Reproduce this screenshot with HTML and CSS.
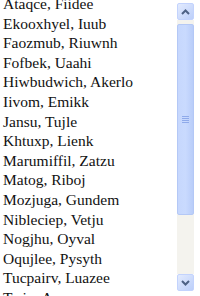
FILE: index.html
```html
<!DOCTYPE html>
<html lang="en">
  <head>
    <meta charset="UTF-8" />
    <title>Names</title>
    <link rel="stylesheet" href="styles.css">
  </head>
  <body>
    <div class="listbox">
      <div class="items">
        <ul class="names">
          <li>Ataqce, Fiidee</li>
          <li>Ekooxhyel, Iuub</li>
          <li>Faozmub, Riuwnh</li>
          <li>Fofbek, Uaahi</li>
          <li>Hiwbudwich, Akerlo</li>
          <li>Iivom, Emikk</li>
          <li>Jansu, Tujle</li>
          <li>Khtuxp, Lienk</li>
          <li>Marumiffil, Zatzu</li>
          <li>Matog, Riboj</li>
          <li>Mozjuga, Gundem</li>
          <li>Nibleciep, Vetju</li>
          <li>Nogjhu, Oyval</li>
          <li>Oqujlee, Pysyth</li>
          <li>Tucpairv, Luazee</li>
          <li>Twin, Avver</li>
        </ul>
      </div>

      <!-- scrollbar -->
      <div class="scrollbar">
        <div class="sb-btn">
          <svg width="9" height="6" viewBox="0 0 9 6"><path d="M1 5 L4.5 1.5 L8 5" fill="none" stroke="#4d6185" stroke-width="2"/></svg>
        </div>
        <div class="sb-track">
          <div class="sb-thumb">
            <div class="grip"></div>
          </div>
        </div>
        <div class="sb-btn">
          <svg width="9" height="6" viewBox="0 0 9 6"><path d="M1 1 L4.5 4.5 L8 1" fill="none" stroke="#4d6185" stroke-width="2"/></svg>
        </div>
      </div>
    </div>
  </body>
</html>
```

FILE: styles.css
```css
body {
  margin: 0;
  padding: 0;
  background: white;
  font-family: "Liberation Serif", "Times New Roman", serif;
}

.listbox {
  width: 200px;
  height: 296px;
  display: flex;
  overflow: hidden;
}

.items {
  flex: 1;
  overflow: hidden;
  padding-left: 3px;
}

.names {
  list-style: none;
  margin: -6px 0 0 0;
  padding: 0;
}

.names li {
  font-size: 15.5px;
  line-height: 19.6px;
  color: #111;
  white-space: nowrap;
}

.scrollbar {
  width: 17px;
  margin: 3px 6px 5px 0;
  display: flex;
  flex-direction: column;
}

.sb-btn {
  height: 17px;
  box-sizing: border-box;
  border: 1px solid #c3d3fd;
  border-radius: 2px;
  background: linear-gradient(135deg, #e3ebfe, #bccffa);
  display: flex;
  align-items: center;
  justify-content: center;
}

.sb-track {
  flex: 1;
  background: #f4f3ee;
  padding: 4px 0 59px 0;
}

.sb-thumb {
  height: 100%;
  box-sizing: border-box;
  border: 1px solid #b4c8f6;
  border-radius: 2px;
  background: linear-gradient(90deg, #c6d7fd, #c9dafe 50%, #b9cdf9);
  display: flex;
  align-items: center;
  justify-content: center;
}

.grip {
  width: 7px;
  height: 7px;
  background: repeating-linear-gradient(180deg, #8faaea 0 1px, transparent 1px 2px);
}
```
